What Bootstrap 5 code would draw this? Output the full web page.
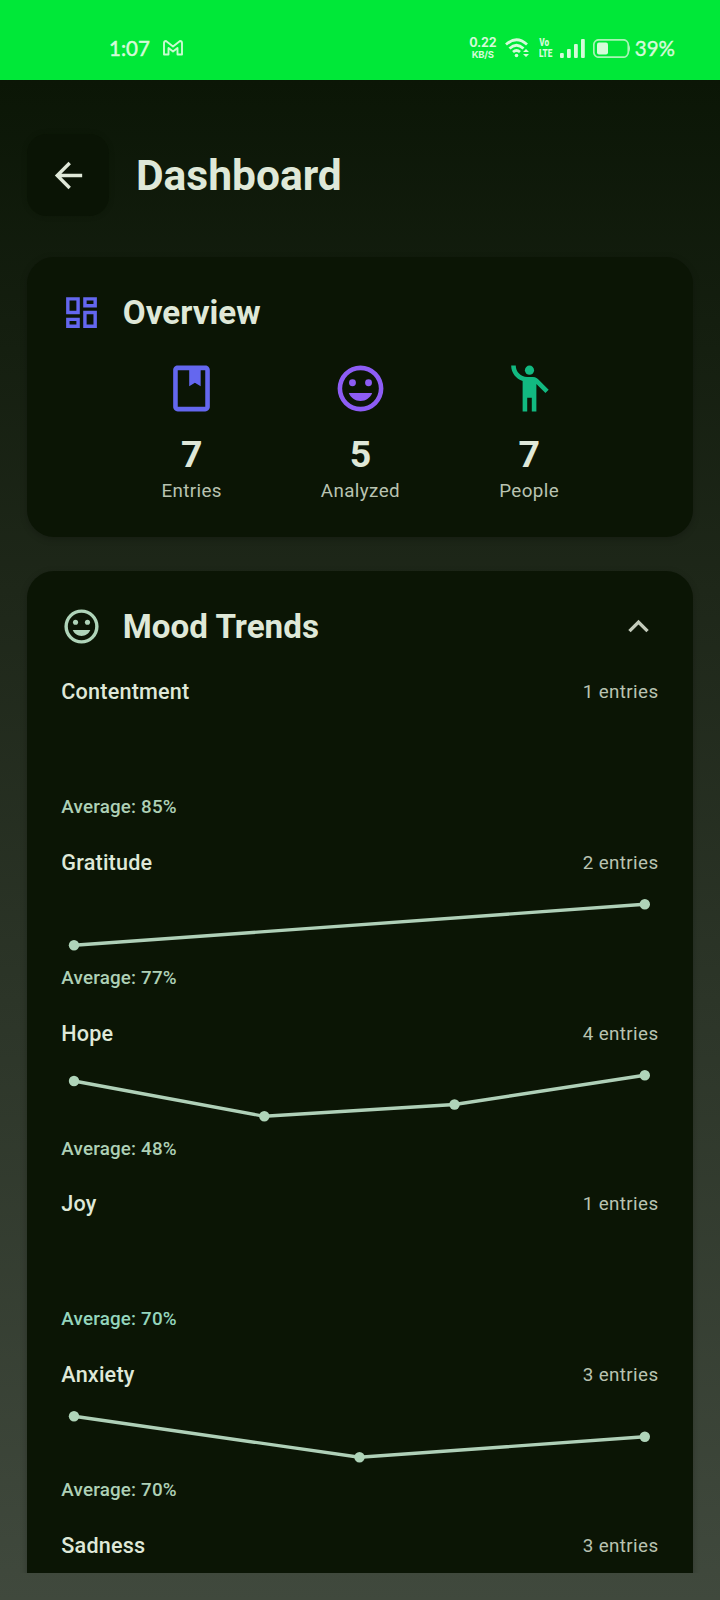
<!DOCTYPE html>
<html lang="en" data-bs-theme="dark">
<head>
<meta charset="utf-8">
<meta name="viewport" content="width=device-width, initial-scale=1">
<title>Dashboard</title>
<link href="https://cdn.jsdelivr.net/npm/bootstrap@5.3.0/dist/css/bootstrap.min.css" rel="stylesheet">
<style>
  body{height:1600px;overflow:hidden;font-family:Roboto,sans-serif;color:#dfe8d8;background:linear-gradient(#0b1606,#0b1606 80px,#1e2719 590px,#2c3528 1000px,#40493d);background-color:#0b1506}
  svg{display:block;flex:none}
  .status-bar{height:80px;background:#00e838;color:#d5fbd9;padding:16px 45px 0 109px}
  .clock{font:400 20.5px/1 Lato,sans-serif;width:54px;-webkit-text-stroke:.5px}
  .rate{width:28px;font:700 12.5px/12px Inter,sans-serif;letter-spacing:-.2px;text-align:center}
  .rate-unit{font-size:9.5px;line-height:11px}
  .volte{width:13px;font:900 10.5px/11px Roboto,sans-serif;text-align:center}
  .volte div{transform:scaleX(.78);transform-origin:0 0}
  .battery-level{font:400 20.5px/1 Lato,sans-serif;-webkit-text-stroke:.4px}
  .screen{height:1492.5px;padding:54px 27px 0;overflow:hidden}
  .back-btn{width:82px;height:82px;border:0;border-radius:20px;background:#0a1405;color:#dfe8d8;box-shadow:0 0 5px #0a140560}
  .page-title{font-size:42.5px;font-weight:700;line-height:1;margin:2px 0 0 27px;color:#dfe8d8}
  .panel{background:#0b1505;border:0;border-radius:27px;box-shadow:0 2px 7px rgba(0,0,0,.22);padding:35px 34.5px 0 34.3px;color:inherit;margin:0}
  .overview{margin-top:41px;height:280px}
  .trends{margin-top:34px;height:1100px}
  .panel-title{font-size:33.2px;font-weight:700;line-height:41px;margin:0 0 0 20.5px;color:#dfe8d8}
  .stats{margin:27.5px 45px 0 46px}
  .stat-value{font-size:37.5px;font-weight:700;line-height:44px;margin-top:16px}
  .stat-label{font-size:18.8px;line-height:26px;letter-spacing:.4px;color:#b9c3b1;margin-top:2px}
  .trends-head{margin-bottom:30.1px}
  .mood{height:170.75px;flex:none}
  .mood-name{font-size:21.6px;font-weight:500;line-height:29px;letter-spacing:.2px}
  .mood-count{font-size:18.8px;line-height:30px;letter-spacing:.4px;color:#b9c3b1}
  .mood-row{height:29px}
  .mood-avg{font-size:18.8px;font-weight:500;line-height:26px;letter-spacing:.2px;color:#aed0b6}
  .mood-avg.joy{color:#94d5bd}
  .mint{color:#afd4b9}
  .spark{height:88px;width:597px;overflow:visible}
  .spark polyline{fill:none;stroke:#afd0b8;stroke-width:3.4}
  .spark circle{fill:#afd4b9}
</style>
</head>
<body>
<svg class="d-none">
  <symbol id="mood" viewBox="0 0 24 24"><path fill-rule="evenodd" d="M12 2a10 10 0 1 0 0 20a10 10 0 1 0 0-20zM12 20a8 8 0 1 1 0-16a8 8 0 1 1 0 16z"/><circle cx="8.5" cy="9.5" r="1.5"/><circle cx="15.5" cy="9.5" r="1.5"/><path d="M12 17.5c2.33 0 4.31-1.46 5.11-3.5H6.89c.8 2.04 2.78 3.5 5.11 3.5z"/></symbol>
</svg>
<header class="status-bar d-flex align-items-center">
  <span class="clock">1:07</span>
  <svg width="20" height="16" viewBox="0 0 20 16" fill="none" stroke="#c9fbd0" stroke-width="1.9" stroke-linejoin="round"><path d="M1 14.500V3Q1 1 3 1L10 6.500L17 1Q19 1 19 3V14.500H14.500V8L10 11.500L5.500 8V14.500Z"/></svg>
  <div class="d-flex align-items-center ms-auto">
    <div class="rate"><div>0.22</div><div class="rate-unit">KB/S</div></div>
    <svg class="ms-2" width="26" height="20" viewBox="0 0 26 20" fill="none" stroke="#d5fbd9" stroke-width="2.8"><path d="M1 6.500Q11.500-3 22 6.500M4.500 10.500Q11.500 4 18.500 10.500M8 14Q11.500 11 15 14"/><circle cx="11.500" cy="17.500" r="1.800" fill="#d5fbd9" stroke="none"/><path d="M18 14l3-3 3 3zM18 16l3 3 3-3z" fill="#d5fbd9" stroke="none"/></svg>
    <div class="volte ms-2"><div>Vo</div><div>LTE</div></div>
    <svg class="ms-2" width="25" height="19" fill="#d5fbd9"><rect y="14" width="3.800" height="5" rx="1"/><rect x="7" y="10" width="3.800" height="9" rx="1"/><rect x="14" y="5" width="3.800" height="14" rx="1"/><rect x="21" width="3.800" height="19" rx="1"/></svg>
    <svg class="ms-2" width="38" height="19" viewBox="0 0 38 19"><rect x=".8" y=".8" width="34.500" height="17.400" rx="5" fill="none" stroke="#a8f5b5" stroke-width="1.700"/><rect x="4" y="3.500" width="11" height="12" rx="2" fill="#d5fbd9"/><path d="M36 6q2 3.500 0 7z" fill="#a8f5b5"/></svg>
    <span class="battery-level ms-1">39%</span>
  </div>
</header>
<main class="screen">
  <div class="d-flex align-items-center">
    <button class="back-btn btn d-flex align-items-center justify-content-center p-0" aria-label="Back"><svg width="41" height="41" viewBox="0 0 24 24" fill="currentColor"><path d="M20 11H7.830l5.590-5.590L12 4l-8 8 8 8 1.410-1.410L7.830 13H20v-2z"/></svg></button>
    <h1 class="page-title">Dashboard</h1>
  </div>
  <section class="card panel overview">
    <div class="d-flex align-items-center">
      <svg width="41" height="41" viewBox="0 0 24 24" fill="#6467ef"><path d="M19 5v2h-4V5h4M9 5v6H5V5h4m10 8v6h-4v-6h4M9 17v2H5v-2h4M21 3h-8v6h8V3zM11 3H3v10h8V3zm10 8h-8v10h8V11zm-10 4H3v6h8v-6z"/></svg>
      <h2 class="panel-title">Overview</h2>
    </div>
    <div class="stats d-flex text-center">
      <div class="col d-flex flex-column align-items-center">
        <svg width="55" height="55" viewBox="0 0 24 24" fill="#6467ef"><path d="M18 2H6c-1.100 0-2 .9-2 2v16c0 1.100.9 2 2 2h12c1.100 0 2-.9 2-2V4c0-1.100-.9-2-2-2zm0 18H6V4h5v7l2.500-1.500L16 11V4h2v16z"/></svg>
        <div class="stat-value">7</div><div class="stat-label">Entries</div>
      </div>
      <div class="col d-flex flex-column align-items-center">
        <svg width="55" height="55" fill="#8d5df5"><use href="#mood"/></svg>
        <div class="stat-value">5</div><div class="stat-label">Analyzed</div>
      </div>
      <div class="col d-flex flex-column align-items-center">
        <svg width="55" height="55" viewBox="0 0 24 24" fill="#12b981"><circle cx="12" cy="4" r="2"/><path d="M15.890 8.110C15.500 7.720 14.830 7 13.530 7c-.21 0-1.420 0-2.540 0C8.240 6.990 6 4.750 6 2H4c0 3.160 2.110 5.840 5 6.710V22h2v-6h2v6h2V10.050L18.950 14l1.410-1.410L15.890 8.110z"/></svg>
        <div class="stat-value">7</div><div class="stat-label">People</div>
      </div>
    </div>
  </section>
  <section class="card panel trends">
    <div class="trends-head d-flex align-items-center">
      <svg class="mint" width="41" height="41" fill="currentColor"><use href="#mood"/></svg>
      <h2 class="panel-title">Mood Trends</h2>
      <svg class="ms-auto" width="41" height="41" viewBox="0 0 24 24" fill="#c3cbbb"><path d="M12 8l-6 6 1.410 1.410L12 10.830l4.590 4.580L18 14z"/></svg>
    </div>
    <div class="mood"><div class="mood-row d-flex justify-content-between"><span class="mood-name">Contentment</span><span class="mood-count">1 entries</span></div><svg class="spark"></svg><div class="mood-avg">Average: 85%</div></div>
    <div class="mood"><div class="mood-row d-flex justify-content-between"><span class="mood-name">Gratitude</span><span class="mood-count">2 entries</span></div><svg class="spark"><polyline points="13,68.300 583.800,27.300"/><circle cx="13" cy="68.300" r="5.200"/><circle cx="583.800" cy="27.300" r="5.200"/></svg><div class="mood-avg">Average: 77%</div></div>
    <div class="mood"><div class="mood-row d-flex justify-content-between"><span class="mood-name">Hope</span><span class="mood-count">4 entries</span></div><svg class="spark"><polyline points="13,33 203.300,68.300 393.500,56.500 583.800,27.300"/><circle cx="13" cy="33" r="5.200"/><circle cx="203.300" cy="68.300" r="5.200"/><circle cx="393.500" cy="56.500" r="5.200"/><circle cx="583.800" cy="27.300" r="5.200"/></svg><div class="mood-avg">Average: 48%</div></div>
    <div class="mood"><div class="mood-row d-flex justify-content-between"><span class="mood-name">Joy</span><span class="mood-count">1 entries</span></div><svg class="spark"></svg><div class="mood-avg joy">Average: 70%</div></div>
    <div class="mood"><div class="mood-row d-flex justify-content-between"><span class="mood-name">Anxiety</span><span class="mood-count">3 entries</span></div><svg class="spark"><polyline points="13,27.300 298.500,68.300 583.800,47.800"/><circle cx="13" cy="27.300" r="5.200"/><circle cx="298.500" cy="68.300" r="5.200"/><circle cx="583.800" cy="47.800" r="5.200"/></svg><div class="mood-avg">Average: 70%</div></div>
    <div class="mood"><div class="mood-row d-flex justify-content-between"><span class="mood-name">Sadness</span><span class="mood-count">3 entries</span></div></div>
  </section>
</main>
<script src="https://cdn.jsdelivr.net/npm/bootstrap@5.3.0/dist/js/bootstrap.bundle.min.js"></script>
</body>
</html>
